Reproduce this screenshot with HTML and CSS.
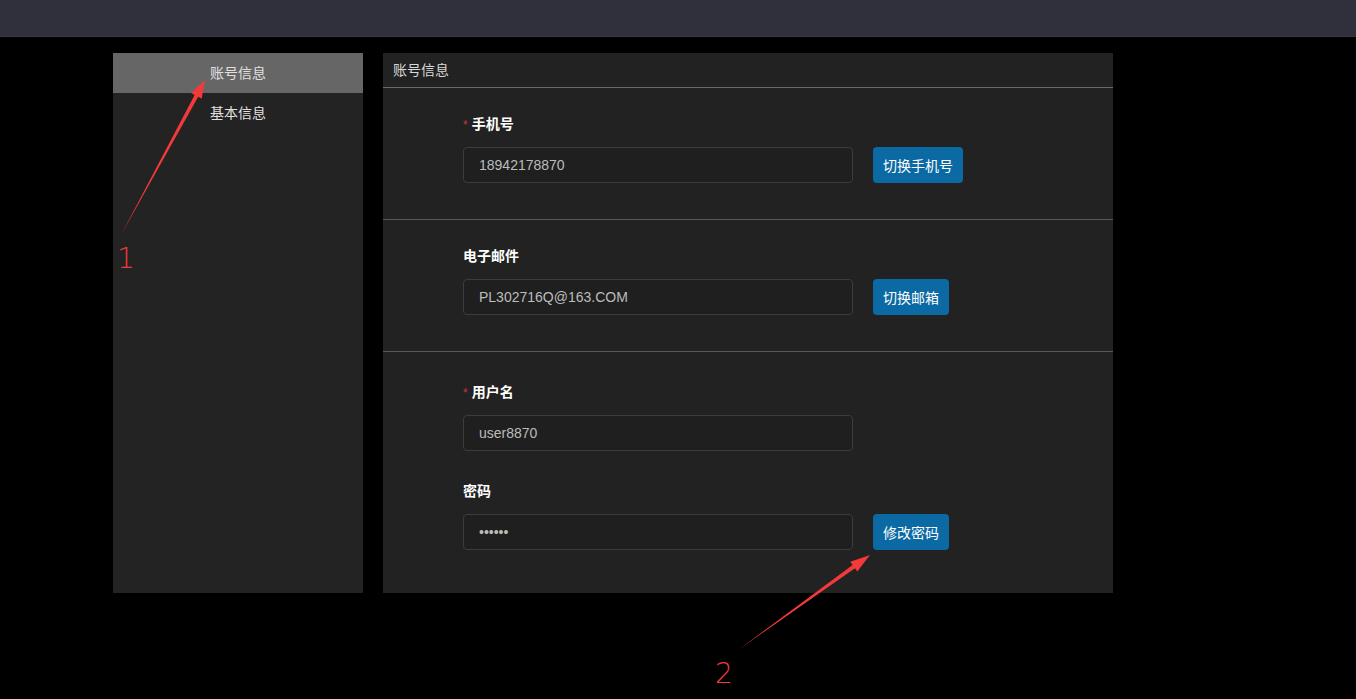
FILE: index.html
```html
<!DOCTYPE html>
<html lang="zh">
<head>
<meta charset="utf-8">
<title>账号信息</title>
<link rel="stylesheet" href="styles.css">
</head>
<body>
<header class="topbar"></header>
<div class="layout">
  <aside class="sidebar">
    <div class="nav-item active">账号信息</div>
    <div class="nav-item">基本信息</div>
  </aside>
  <main class="panel">
    <div class="panel-title">账号信息</div>
    <section class="section">
      <div class="label"><span class="req">*</span>手机号</div>
      <div class="row">
        <input class="field" type="text" value="18942178870" readonly>
        <button class="btn">切换手机号</button>
      </div>
    </section>
    <section class="section">
      <div class="label">电子邮件</div>
      <div class="row">
        <input class="field" type="text" value="PL302716Q@163.COM" readonly>
        <button class="btn">切换邮箱</button>
      </div>
    </section>
    <section class="section last">
      <div class="label"><span class="req">*</span>用户名</div>
      <div class="row">
        <input class="field" type="text" value="user8870" readonly>
      </div>
      <div class="label second">密码</div>
      <div class="row">
        <input class="field" type="password" value="123456" readonly>
        <button class="btn">修改密码</button>
      </div>
    </section>
  </main>
</div>
<svg class="annotations" width="1356" height="699" viewBox="0 0 1356 699">
  <polygon points="121,235 194.6,94.9 191.1,92.9 205,80 201.7,98.7 198.2,96.8" fill="#f23a3a"/>
  <text x="117" y="268" class="anno-num">1</text>
  <polygon points="738,650 852.6,565.1 850.3,561.8 870,555 857.3,571.6 855,568.3" fill="#f23a3a"/>
  <text x="715" y="683" class="anno-num">2</text>
</svg>
</body>
</html>
```

FILE: styles.css
```css
html, body {
  margin: 0;
  padding: 0;
}
body {
  background: #000;
  width: 1356px;
  height: 699px;
  overflow: hidden;
  position: relative;
  font-family: "Liberation Sans", "Noto Sans CJK SC", sans-serif;
  font-size: 14px;
  color: #ddd;
}
.topbar {
  height: 37px;
  background: #30303c;
  border-bottom: 1px solid #3a3844;
  box-sizing: border-box;
}
.layout {
  display: flex;
  gap: 20px;
  padding: 16px 0 0 113px;
}
.sidebar {
  width: 250px;
  height: 540px;
  background: #232323;
}
.nav-item {
  height: 40px;
  line-height: 40px;
  text-align: center;
  color: #e0e0e0;
  font-size: 14px;
}
.nav-item.active {
  background: #666;
}
.panel {
  width: 730px;
  height: 540px;
  background: #222;
}
.panel-title {
  height: 34px;
  line-height: 34px;
  padding-left: 10px;
  border-bottom: 1px solid #6a6a6a;
  color: #d8d8d8;
}
.section {
  padding: 26px 0 36px 80px;
  border-bottom: 1px solid #5a5a5a;
}
.section.last {
  border-bottom: none;
  padding-top: 30px;
  padding-bottom: 0;
}
.label {
  height: 20px;
  line-height: 20px;
  font-weight: bold;
  color: #fff;
  margin-bottom: 13px;
  overflow: hidden;
}
.label.second {
  margin-top: 30px;
}
.req {
  color: #c0393b;
  font-weight: normal;
  margin-right: 4px;
  font-size: 12px;
}
.row {
  display: flex;
  gap: 20px;
  align-items: center;
}
.field {
  width: 390px;
  height: 36px;
  box-sizing: border-box;
  background: #1f1f1f;
  border: 1px solid #3c3c3c;
  border-radius: 4px;
  padding: 0 15px;
  color: #bcbcbc;
  font-family: "Liberation Sans", "Noto Sans CJK SC", sans-serif;
  font-size: 14px;
  outline: none;
}
.btn {
  height: 36px;
  padding: 0 10px;
  border: none;
  border-radius: 4px;
  background: #0b6aa4;
  color: #fff;
  font-family: "Liberation Sans", "Noto Sans CJK SC", sans-serif;
  font-size: 14px;
}
.annotations {
  position: absolute;
  left: 0;
  top: 0;
  pointer-events: none;
}
.anno-num {
  fill: #f23a3a;
  font-family: "DejaVu Sans", sans-serif;
  font-size: 28px;
  font-weight: 300;
}
```
